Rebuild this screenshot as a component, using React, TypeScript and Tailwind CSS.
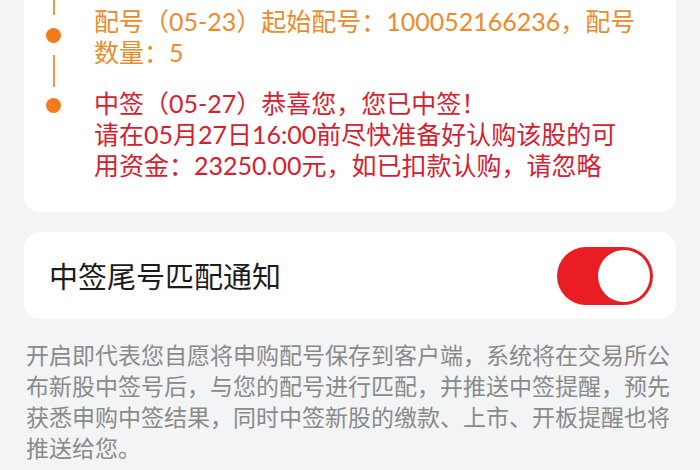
const font = { fontFamily: '"Noto Sans CJK SC", "Noto Sans", sans-serif' }
const mixedFont = { fontFamily: 'Lato, "Noto Sans CJK SC", sans-serif' }

function Dot() {
  return <div className="w-[15px] h-[15px] rounded-full bg-[#f57a1e] shrink-0" />
}

function Segment({ className }: { className: string }) {
  return <div className={`w-[2px] bg-[#f29a3f] ${className}`} />
}

function Toggle() {
  return (
    <div className="w-[96px] h-[58px] rounded-full bg-[#ea1c24] flex items-center justify-end pr-[3px] shrink-0">
      <div className="w-[52px] h-[52px] rounded-full bg-white" />
    </div>
  )
}

export default function App() {
  return (
    <div className="w-[700px] h-[470px] overflow-hidden bg-[#f3f4f5]" style={font}>
      {/* 配号 / 中签 时间线卡片，顶部已滚出视野 */}
      <div className="mx-6 -mt-4 bg-white rounded-2xl flex">
        <div className="ml-[22px] w-[15px] flex flex-col items-center">
          <Segment className="h-[31px]" />
          <div className="mt-[13px]"><Dot /></div>
          <Segment className="mt-[12px] h-[32px]" />
          <div className="mt-[11px]"><Dot /></div>
        </div>
        <div
          className="ml-[33px] pt-[22px] pb-[31px] text-[25px] leading-[31px] whitespace-nowrap"
          style={mixedFont}
        >
          <p className="text-[#ec8a2c]">
            配号（05-23）起始配号：100052166236，配号
            <br />
            数量：5
          </p>
          <p className="mt-[20px] text-[#d7202f]">
            中签（05-27）恭喜您，您已中签！
            <br />
            请在05月27日16:00前尽快准备好认购该股的可
            <br />
            用资金：23250.00元，如已扣款认购，请忽略
          </p>
        </div>
      </div>

      <div className="mx-6 mt-5 h-[87px] bg-white rounded-2xl flex items-center justify-between pl-[25px] pr-[23px]">
        <span className="text-[29px] text-[#1c1c1c]">中签尾号匹配通知</span>
        <Toggle />
      </div>

      <p className="mt-[20px] px-[26px] text-[23px] leading-[31px] text-[#8a8a8a] whitespace-nowrap">
        开启即代表您自愿将申购配号保存到客户端，系统将在交易所公
        <br />
        布新股中签号后，与您的配号进行匹配，并推送中签提醒，预先
        <br />
        获悉申购中签结果，同时中签新股的缴款、上市、开板提醒也将
        <br />
        推送给您。
      </p>
    </div>
  )
}
